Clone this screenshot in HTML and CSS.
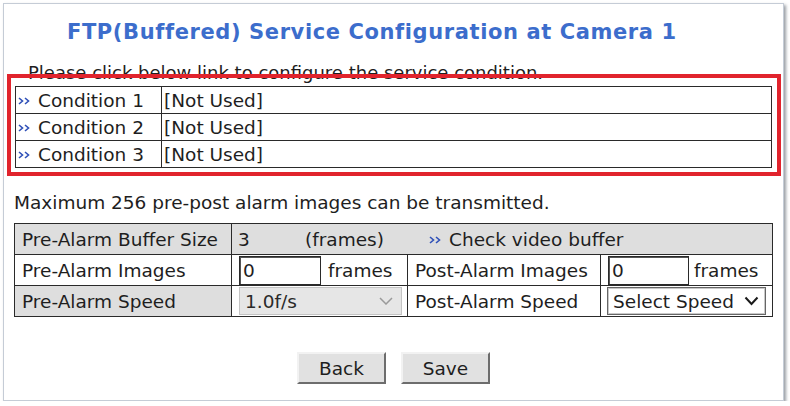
FILE: index.html
```html
<!DOCTYPE html>
<html>
<head>
<meta charset="utf-8">
<link rel="stylesheet" href="styles.css">
</head>
<body>
<div class="window">
  <h1 class="title">FTP(Buffered) Service Configuration at Camera 1</h1>
  <p class="note">Please click below link to configure the service condition.</p>
  <table class="conds">
    <colgroup><col class="c1"><col></colgroup>
    <tr><td class="cname"><a class="link"><svg class="arr" width="14" height="8" viewBox="0 0 14 8"><polyline points="2,1 5.5,4 2,7"/><polyline points="8,1 11.5,4 8,7"/></svg>Condition 1</a></td><td class="cval">[Not Used]</td></tr>
    <tr><td class="cname"><a class="link"><svg class="arr" width="14" height="8" viewBox="0 0 14 8"><polyline points="2,1 5.5,4 2,7"/><polyline points="8,1 11.5,4 8,7"/></svg>Condition 2</a></td><td class="cval">[Not Used]</td></tr>
    <tr><td class="cname"><a class="link"><svg class="arr" width="14" height="8" viewBox="0 0 14 8"><polyline points="2,1 5.5,4 2,7"/><polyline points="8,1 11.5,4 8,7"/></svg>Condition 3</a></td><td class="cval">[Not Used]</td></tr>
  </table>
  <div class="highlight"></div>
  <p class="max">Maximum 256 pre-post alarm images can be transmitted.</p>
  <table class="cfg">
    <colgroup><col class="k1"><col class="k2"><col class="k3"><col class="k4"></colgroup>
    <tr class="shaded">
      <td>Pre-Alarm Buffer Size</td>
      <td colspan="3" class="bufcell"><span class="val">3</span><span class="unit">(frames)</span><a class="link"><svg class="arr" width="14" height="8" viewBox="0 0 14 8"><polyline points="2,1 5.5,4 2,7"/><polyline points="8,1 11.5,4 8,7"/></svg>Check video buffer</a></td>
    </tr>
    <tr>
      <td>Pre-Alarm Images</td>
      <td class="fieldcell"><input class="num num-a" type="text" value="0"><span class="frames-a">frames</span></td>
      <td>Post-Alarm Images</td>
      <td class="fieldcell fc2"><input class="num num-b" type="text" value="0"><span class="frames-b">frames</span></td>
    </tr>
    <tr>
      <td class="shadedcell">Pre-Alarm Speed</td>
      <td class="selcell"><div class="sel sel-dis"><span>1.0f/s</span><svg width="14" height="8" viewBox="0 0 14 8"><polyline points="1,1 7,7 13,1"/></svg></div></td>
      <td>Post-Alarm Speed</td>
      <td class="selcell sc2"><div class="sel sel-on"><span>Select Speed</span><svg width="15" height="10" viewBox="0 0 15 10"><polyline points="1.5,1.5 7.5,8 13.5,1.5"/></svg></div></td>
    </tr>
  </table>
  <div class="buttons">
    <button type="button">Back</button>
    <button type="button">Save</button>
  </div>
</div>
</body>
</html>
```
FILE: styles.css
```css
* { box-sizing: border-box; }

body {
  margin: 0;
  background: #ffffff;
  font-family: "DejaVu Sans", Verdana, sans-serif;
  font-size: 18.5px;
  color: #1e1e1e;
}

.window {
  position: relative;
  margin: 3px 0 0 3px;
  width: 781px;
  height: 398px;
  border: 1px solid #c5ccd6;
  background: #ffffff;
  box-shadow: 2px 2px 3px rgba(70, 78, 90, 0.55);
}

.title {
  margin: 16px 0 0;
  padding-left: 63px;
  font-size: 21px;
  letter-spacing: 0.6px;
  line-height: 24px;
  font-weight: bold;
  color: #3c6dcc;
  white-space: nowrap;
}

.note {
  margin: 18px 0 0 24px;
  line-height: 21px;
  font-size: 18px;
}

.link { color: #1e1e1e; text-decoration: none; }

.arr {
  display: inline-block;
  vertical-align: middle;
  margin: 0 7px 2px 0;
}
.arr polyline {
  fill: none;
  stroke: #2f50b8;
  stroke-width: 1.6;
}

.conds {
  margin: 3px 0 0 11px;
  width: 757px;
  border-collapse: collapse;
  table-layout: fixed;
}
.conds .c1 { width: 146px; }
.conds td {
  border: 1px solid #2a2a2a;
  height: 27px;
  padding: 0;
  line-height: 21px;
  white-space: nowrap;
}
.conds .cname { padding-left: 1px; }
.conds .cval { padding-left: 2px; }

.highlight {
  position: absolute;
  left: 3px;
  top: 70px;
  width: 774px;
  height: 102px;
  border: 4px solid #e1242d;
}

.max {
  margin: 24px 0 0 10px;
  line-height: 21px;
}

.cfg {
  margin: 10px 0 0 10px;
  width: 758px;
  border-collapse: collapse;
  table-layout: fixed;
}
.cfg .k1 { width: 217px; }
.cfg .k2 { width: 176px; }
.cfg .k3 { width: 193px; }
.cfg .k4 { width: 172px; }
.cfg td {
  border: 1px solid #2a2a2a;
  height: 31px;
  padding: 0 0 0 7px;
  white-space: nowrap;
  line-height: 21px;
}
.cfg .shaded td, .cfg .shadedcell { background: #dedede; }
.cfg .bufcell { padding-left: 6px; }
.val { display: inline-block; width: 67px; }
.unit { display: inline-block; width: 123px; }

.fieldcell { padding-left: 6px; }
.num {
  height: 29px;
  border: 1px solid #2a2a2a;
  box-shadow: inset 1px 1px 0 #555;
  padding: 0 0 0 3px;
  font: inherit;
  color: #1e1e1e;
  background: #fff;
  vertical-align: middle;
  outline: none;
}
.num-a { width: 82px; margin-right: 7px; }
.num-b { width: 81px; margin-right: 5px; }
.frames-a, .frames-b { vertical-align: middle; }

.selcell { padding-left: 8px; }
.selcell.sc2 { padding-left: 6px; }
.sel {
  display: flex;
  align-items: center;
  justify-content: space-between;
  height: 28px;
  padding: 0 8px 0 5px;
}
.sel-dis {
  width: 163px;
  background: #e6e6e6;
  border: 1px solid #c4c4c4;
  color: #2a2a2a;
}
.sel-dis polyline { fill: none; stroke: #9a9a9a; stroke-width: 1.5; }
.sel-on {
  width: 159px;
  background: #ffffff;
  border: 1px solid #666;
  box-shadow: inset 0 0 0 1px #c8c8c8;
  padding: 0 6px 0 5px;
}
.sel-on polyline { fill: none; stroke: #1a1a1a; stroke-width: 2; }

.buttons {
  display: flex;
  justify-content: center;
  gap: 15px;
  margin-top: 35px;
}
button {
  width: 89px;
  height: 32px;
  padding: 0;
  font: inherit;
  color: #1e1e1e;
  background: #e1e1e1;
  border: 2px solid;
  border-color: #f2f2f2 #6d6d6d #6d6d6d #f2f2f2;
}
```
